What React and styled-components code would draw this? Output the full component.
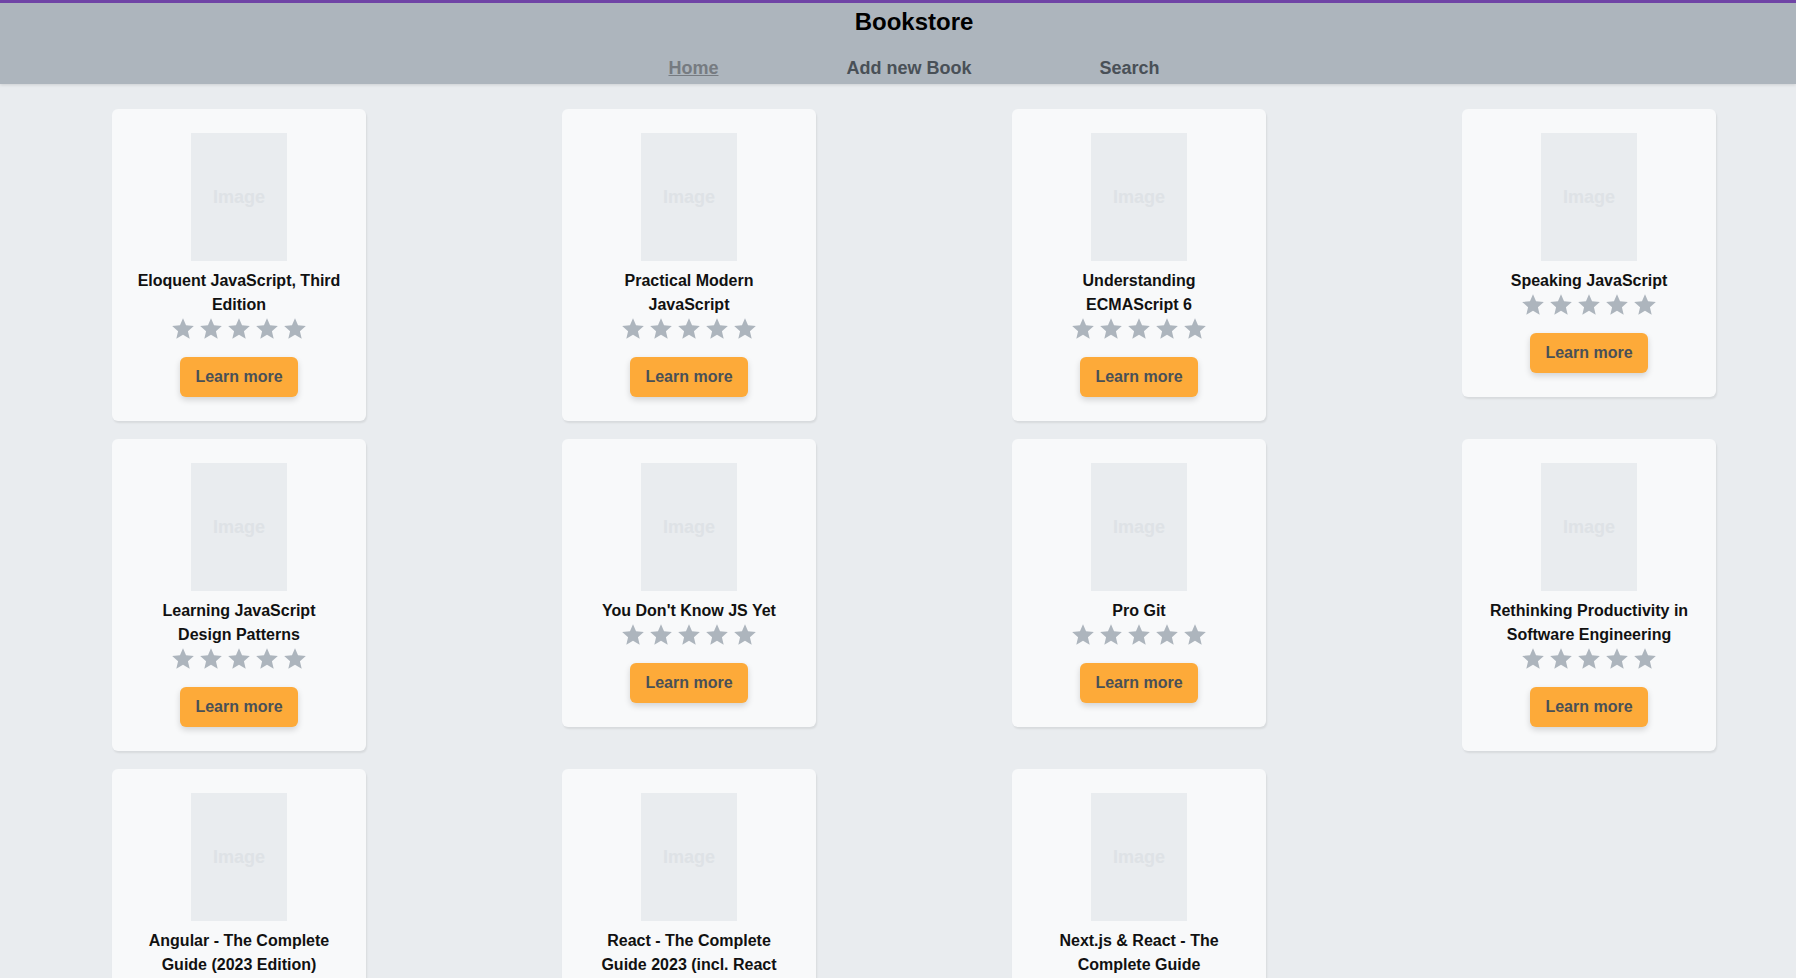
import styled, { createGlobalStyle } from 'styled-components'

const books = [
  'Eloquent JavaScript, Third Edition',
  'Practical Modern JavaScript',
  'Understanding ECMAScript 6',
  'Speaking JavaScript',
  'Learning JavaScript Design Patterns',
  "You Don't Know JS Yet",
  'Pro Git',
  'Rethinking Productivity in Software Engineering',
  'Angular - The Complete Guide (2023 Edition)',
  'React - The Complete Guide 2023 (incl. React Router & Redux)',
  'Next.js & React - The Complete Guide',
]

const GlobalStyle = createGlobalStyle`
  html, body {
    margin: 0;
    padding: 0;
    background: #e9ecef;
    font-family: "Liberation Sans", Arial, sans-serif;
  }
  * {
    box-sizing: border-box;
  }
`

function StarIcon() {
  return (
    <svg width="26" height="26" viewBox="0 0 24 24" aria-hidden="true">
      <path
        fill="#adb5bd"
        d="M12 17.27L18.18 21l-1.64-7.03L22 9.24l-7.19-.61L12 2 9.19 8.63 2 9.24l5.46 4.73L5.82 21z"
      />
    </svg>
  )
}

function BookCard({ title }) {
  return (
    <Card>
      <Cover>Image</Cover>
      <Title>{title}</Title>
      <Stars>
        {[0, 1, 2, 3, 4].map((i) => (
          <StarIcon key={i} />
        ))}
      </Stars>
      <LearnMore>Learn more</LearnMore>
    </Card>
  )
}

export default function App() {
  return (
    <Page>
      <GlobalStyle />
      <Header>
        <Brand>Bookstore</Brand>
        <Nav>
          <NavLink $active>Home</NavLink>
          <NavLink>Add new Book</NavLink>
          <NavLink>Search</NavLink>
        </Nav>
      </Header>
      <Grid>
        {books.map((b) => (
          <BookCard key={b} title={b} />
        ))}
      </Grid>
    </Page>
  )
}

const Page = styled.div`
  min-height: 100vh;
  background: #e9ecef;
  overflow: hidden;
`

const Header = styled.header`
  background: #adb5bd;
  border-top: 3px solid #7044a6;
  height: 84px;
  padding: 5px 0 0 32px;
  display: flex;
  flex-direction: column;
  align-items: center;
  box-shadow: 0 1px 3px rgba(0, 0, 0, 0.12);
`

const Brand = styled.h1`
  margin: 0;
  font-size: 24px;
  line-height: 28px;
  font-weight: bold;
  color: #000;
`

const Nav = styled.nav`
  margin-top: 21px;
  display: flex;
  gap: 128px;
`

const NavLink = styled.a`
  font-size: 18px;
  line-height: 22px;
  font-weight: bold;
  color: ${(p) => (p.$active ? '#767b81' : '#495057')};
  text-decoration: ${(p) => (p.$active ? 'underline' : 'none')};
  cursor: pointer;
`

const Grid = styled.main`
  display: grid;
  grid-template-columns: repeat(4, 254px);
  column-gap: 196px;
  row-gap: 18px;
  align-items: start;
  padding: 25px 0 24px 112px;
`

const Card = styled.div`
  width: 254px;
  padding: 24px;
  background: #f8f9fa;
  border-radius: 6px;
  box-shadow: 1px 2px 2px rgba(0, 0, 0, 0.08);
  display: flex;
  flex-direction: column;
  align-items: center;
  text-align: center;
`

const Cover = styled.div`
  width: 96px;
  height: 128px;
  background: #e9ecef;
  color: #dee2e6;
  font-size: 18px;
  font-weight: bold;
  display: flex;
  align-items: center;
  justify-content: center;
`

const Title = styled.h5`
  margin: 8px 0 0;
  font-size: 16px;
  line-height: 24px;
  font-weight: bold;
  color: #111;
`

const Stars = styled.div`
  height: 24px;
  display: flex;
  align-items: center;
  gap: 2px;
`

const LearnMore = styled.button`
  margin-top: 16px;
  height: 40px;
  padding: 0 15px;
  border: none;
  border-radius: 6px;
  background: #fdaa39;
  color: #495057;
  font-family: inherit;
  font-size: 16px;
  font-weight: bold;
  box-shadow: 0 3px 6px rgba(0, 0, 0, 0.15);
  cursor: pointer;
`
